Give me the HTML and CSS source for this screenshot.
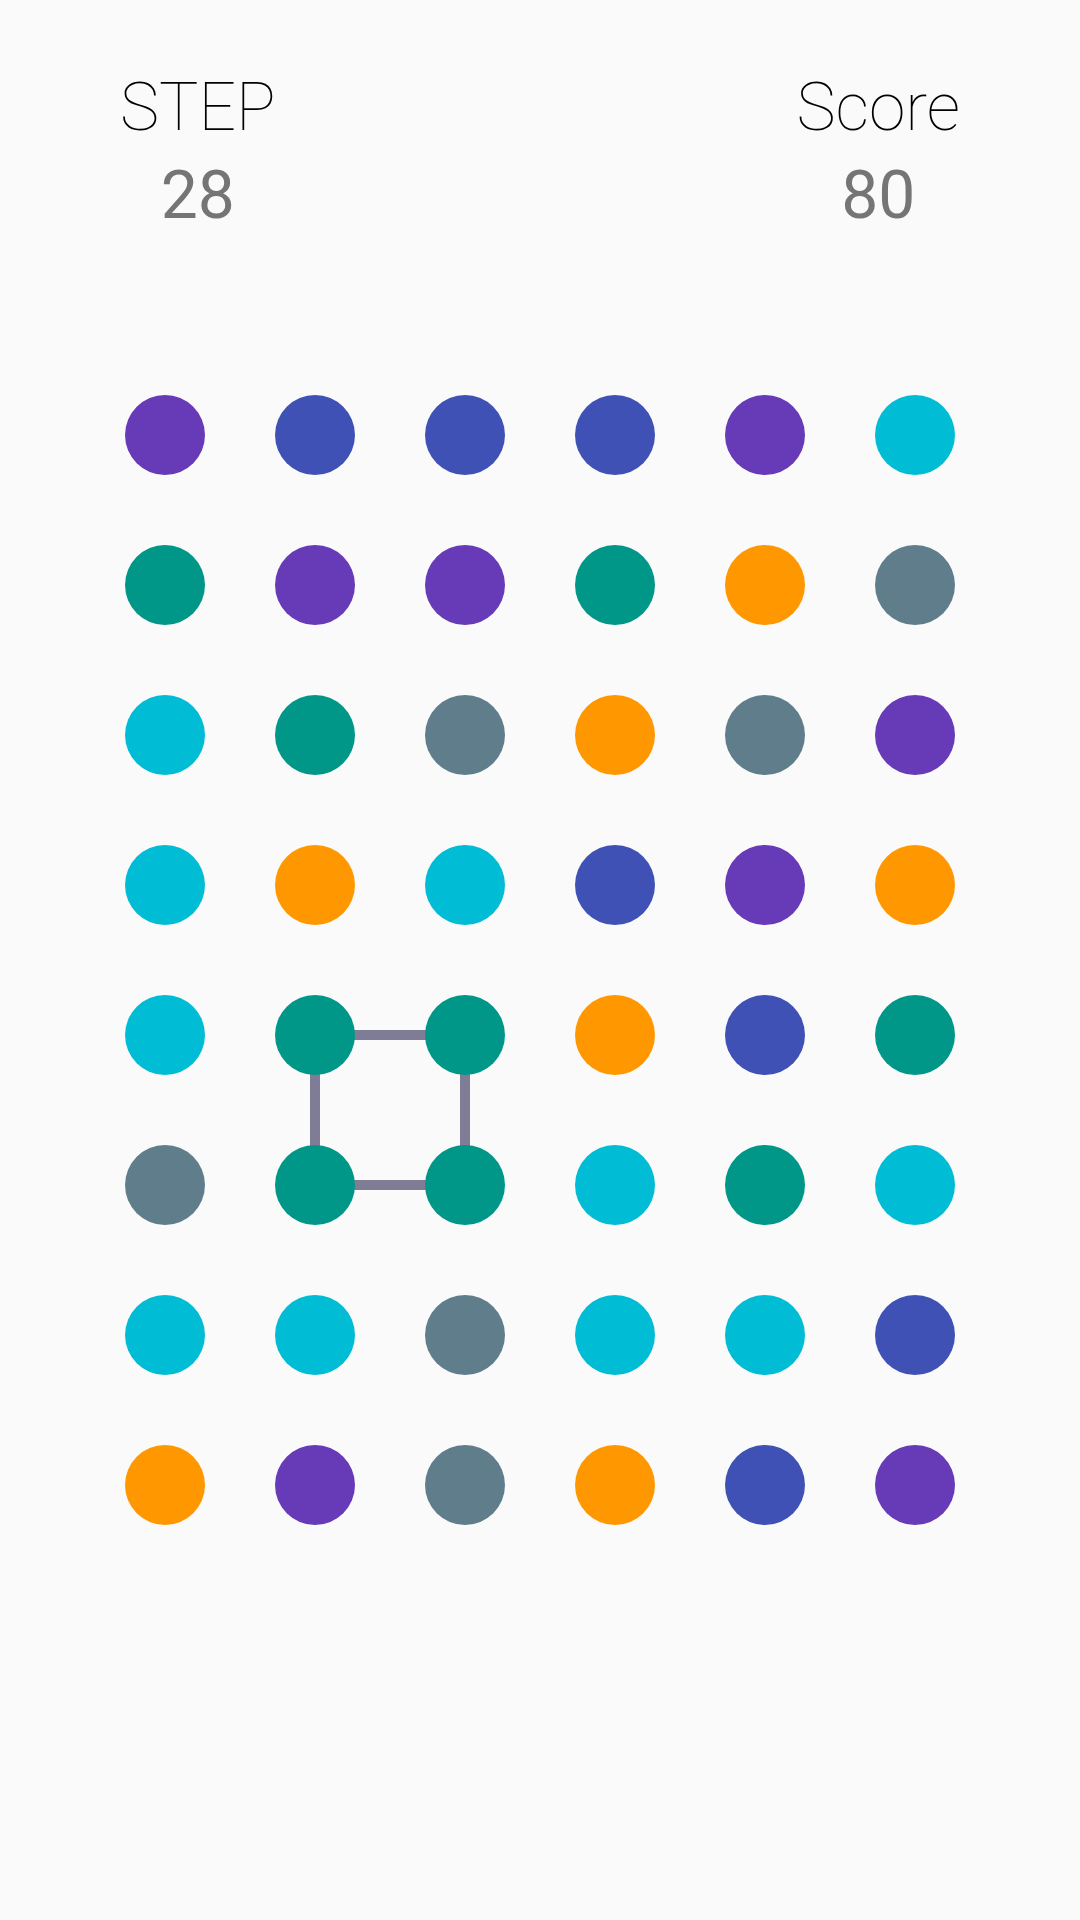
FILE: index.html
```html
<!DOCTYPE html>
<html lang="en">
<head>
  <meta charset="UTF-8" />
  <title>Dots</title>
  <link rel="stylesheet" href="styles.css">
</head>
<body>
  <div class="header">
    <div class="stat">
      <div class="label">STEP</div>
      <div class="value">28</div>
    </div>
    <div class="stat">
      <div class="label">Score</div>
      <div class="value">80</div>
    </div>
  </div>

  <div class="board">
    <svg class="links" width="900" height="1200" viewBox="0 0 900 1200">
      <polyline points="225,675 375,675 375,825 225,825 225,675" fill="none" stroke="#7f7d96" stroke-width="10" />
    </svg>

    <div class="cell"><span class="dot purple"></span></div>
    <div class="cell"><span class="dot indigo"></span></div>
    <div class="cell"><span class="dot indigo"></span></div>
    <div class="cell"><span class="dot indigo"></span></div>
    <div class="cell"><span class="dot purple"></span></div>
    <div class="cell"><span class="dot cyan"></span></div>

    <div class="cell"><span class="dot teal"></span></div>
    <div class="cell"><span class="dot purple"></span></div>
    <div class="cell"><span class="dot purple"></span></div>
    <div class="cell"><span class="dot teal"></span></div>
    <div class="cell"><span class="dot orange"></span></div>
    <div class="cell"><span class="dot grey"></span></div>

    <div class="cell"><span class="dot cyan"></span></div>
    <div class="cell"><span class="dot teal"></span></div>
    <div class="cell"><span class="dot grey"></span></div>
    <div class="cell"><span class="dot orange"></span></div>
    <div class="cell"><span class="dot grey"></span></div>
    <div class="cell"><span class="dot purple"></span></div>

    <div class="cell"><span class="dot cyan"></span></div>
    <div class="cell"><span class="dot orange"></span></div>
    <div class="cell"><span class="dot cyan"></span></div>
    <div class="cell"><span class="dot indigo"></span></div>
    <div class="cell"><span class="dot purple"></span></div>
    <div class="cell"><span class="dot orange"></span></div>

    <div class="cell"><span class="dot cyan"></span></div>
    <div class="cell"><span class="dot teal"></span></div>
    <div class="cell"><span class="dot teal"></span></div>
    <div class="cell"><span class="dot orange"></span></div>
    <div class="cell"><span class="dot indigo"></span></div>
    <div class="cell"><span class="dot teal"></span></div>

    <div class="cell"><span class="dot grey"></span></div>
    <div class="cell"><span class="dot teal"></span></div>
    <div class="cell"><span class="dot teal"></span></div>
    <div class="cell"><span class="dot cyan"></span></div>
    <div class="cell"><span class="dot teal"></span></div>
    <div class="cell"><span class="dot cyan"></span></div>

    <div class="cell"><span class="dot cyan"></span></div>
    <div class="cell"><span class="dot cyan"></span></div>
    <div class="cell"><span class="dot grey"></span></div>
    <div class="cell"><span class="dot cyan"></span></div>
    <div class="cell"><span class="dot cyan"></span></div>
    <div class="cell"><span class="dot indigo"></span></div>

    <div class="cell"><span class="dot orange"></span></div>
    <div class="cell"><span class="dot purple"></span></div>
    <div class="cell"><span class="dot grey"></span></div>
    <div class="cell"><span class="dot orange"></span></div>
    <div class="cell"><span class="dot indigo"></span></div>
    <div class="cell"><span class="dot purple"></span></div>
  </div>
</body>
</html>
```

FILE: styles.css
```css
body {
  margin: 0;
  background: #fafafa;
}
.header {
  display: flex;
  justify-content: space-between;
  padding: 64px 120px 0;
  font-family: Roboto, sans-serif;
  font-size: 66px;
  line-height: 88px;
}
.stat {
  text-align: center;
}
.label {
  font-weight: 100;
  color: #000;
}
.value {
  font-weight: 400;
  color: #757575;
}
.board {
  position: relative;
  width: 900px;
  margin: 120px auto 0;
  display: grid;
  grid-template-columns: repeat(6, 150px);
  grid-auto-rows: 150px;
}
.links {
  position: absolute;
  left: 0;
  top: 0;
}
.cell {
  display: flex;
  align-items: center;
  justify-content: center;
  position: relative;
}
.dot {
  width: 80px;
  height: 80px;
  border-radius: 50%;
}
.purple { background: #673ab7; }
.indigo { background: #3f51b5; }
.cyan { background: #00bcd4; }
.teal { background: #009688; }
.orange { background: #ff9800; }
.grey { background: #607d8b; }
```
